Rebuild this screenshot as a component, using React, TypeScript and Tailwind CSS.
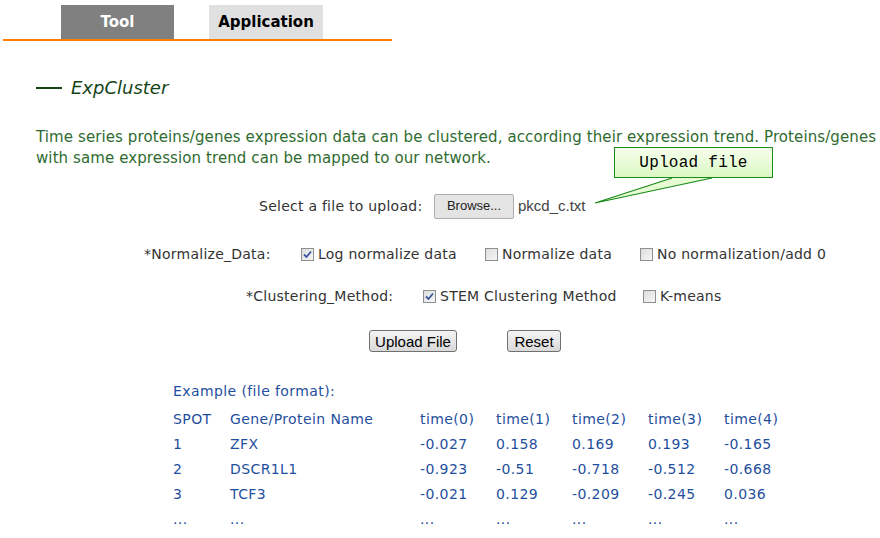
import React from "react";

const rows = [
  ["1", "ZFX", "-0.027", "0.158", "0.169", "0.193", "-0.165"],
  ["2", "DSCR1L1", "-0.923", "-0.51", "-0.718", "-0.512", "-0.668"],
  ["3", "TCF3", "-0.021", "0.129", "-0.209", "-0.245", "0.036"],
  ["...", "...", "...", "...", "...", "...", "..."],
];
const head = ["SPOT", "Gene/Protein Name", "time(0)", "time(1)", "time(2)", "time(3)", "time(4)"];
const colW = ["w-[57px]", "w-[190px]", "w-[76px]", "w-[76px]", "w-[76px]", "w-[76px]", "w-[80px]"];

function Check({ on }: { on?: boolean }) {
  return (
    <span className="inline-flex h-[13px] w-[13px] shrink-0 items-center justify-center border border-[#8e8f8f] bg-gradient-to-br from-[#dcdcdc] to-[#f7f7f7]">
      {on && (
        <svg width="9" height="9" viewBox="0 0 9 9">
          <path d="M1 4.5 L3.5 7 L8 1.5" fill="none" stroke="#3c55a0" strokeWidth="1.8" />
        </svg>
      )}
    </span>
  );
}

function Opt({ on, label, w }: { on?: boolean; label: string; w: string }) {
  return (
    <span className={`flex items-center gap-[4px] ${w}`}>
      <Check on={on} />
      <span>{label}</span>
    </span>
  );
}

export default function App() {
  return (
    <div className="relative h-[538px] w-[880px] overflow-hidden bg-white text-[14px] tracking-[0.25px] text-[#333] font-['DejaVu_Sans',sans-serif]">
      {/* tabs */}
      <div className="flex pt-[5px] text-[15px] font-bold tracking-normal">
        <div className="ml-[61px] flex h-[34px] w-[113px] items-center justify-center pt-[1px] bg-[#808080] text-white">Tool</div>
        <div className="ml-[35px] flex h-[34px] w-[114px] items-center justify-center pt-[1px] bg-[#e0e0e0] text-black">Application</div>
      </div>
      <div className="ml-[3px] h-[2px] w-[389px] bg-[#ff7f00]" />

      {/* title */}
      <div className="ml-[36px] mt-[31px] flex h-[30px] items-center text-[#164416] tracking-normal">
        <span className="mt-[2px] h-[2px] w-[26px] bg-[#164416]" />
        <span className="ml-[9px] text-[18px] italic">ExpCluster</span>
      </div>

      <p className="ml-[36px] mt-[25px] w-[844px] text-[15px] leading-[21px] tracking-[0.1px] text-[#2f6b2f]">
        Time series proteins/genes expression data can be clustered, according their expression trend. Proteins/genes with same expression trend can be mapped to our network.
      </p>

      {/* upload */}
      <div className="mt-[24px] flex h-[26px] items-center">
        <span className="ml-[259px] w-[175px]">Select a file to upload:</span>
        <button className="h-[25px] w-[80px] rounded-[2px] border border-[#adadad] bg-[#e4e4e4] text-[13px] tracking-normal text-[#222] font-['Liberation_Sans',sans-serif]">
          Browse...
        </button>
        <span className="ml-[4px] text-[15px] tracking-normal text-[#444] font-['Liberation_Sans',sans-serif]">pkcd_c.txt</span>
      </div>

      <div className="mt-[22px] flex h-[26px] items-center">
        <span className="ml-[144px] w-[157px]">*Normalize_Data:</span>
        <Opt on label="Log normalize data" w="w-[184px]" />
        <Opt label="Normalize data" w="w-[155px]" />
        <Opt label="No normalization/add 0" w="w-[220px]" />
      </div>

      <div className="mt-[16px] flex h-[26px] items-center">
        <span className="ml-[246px] w-[177px]">*Clustering_Method:</span>
        <Opt on label="STEM Clustering Method" w="w-[220px]" />
        <Opt label="K-means" w="w-[100px]" />
      </div>

      <div className="mt-[21px] flex h-[22px] items-stretch text-[15px] tracking-normal text-black font-['Liberation_Sans',sans-serif]">
        <button className="ml-[369px] w-[88px] rounded-[3px] border border-[#707070] bg-gradient-to-b from-[#f4f4f4] to-[#d9d9d9]">Upload File</button>
        <button className="ml-[50px] w-[54px] rounded-[3px] border border-[#707070] bg-gradient-to-b from-[#f4f4f4] to-[#d9d9d9]">Reset</button>
      </div>

      {/* example */}
      <div className="ml-[173px] mt-[27px] tracking-[0.4px] text-[#1f4f9e]">
        <div className="leading-[25px]">Example (file format):</div>
        <div className="mt-[3px]">
          {[head, ...rows].map((r, i) => (
            <div key={i} className="flex leading-[25px]">
              {r.map((c, j) => (
                <span key={j} className={colW[j]}>{c}</span>
              ))}
            </div>
          ))}
        </div>
      </div>

      {/* callout */}
      <div className="absolute left-[614px] top-[147px] flex h-[31px] w-[159px] items-center justify-center border border-[#1a8a1a] bg-gradient-to-b from-[#f6ffec] to-[#dcf8c4] text-[16px] text-black font-['Liberation_Mono',monospace]">
        Upload file
      </div>
      <svg className="absolute left-[590px] top-[176px]" width="130" height="32" viewBox="0 0 130 32">
        <polygon points="82,2 122,2 5,27" fill="#e6fbd2" />
        <path d="M82 2 L5 27 L122 2" fill="none" stroke="#1a8a1a" strokeWidth="1.2" />
      </svg>
    </div>
  );
}
